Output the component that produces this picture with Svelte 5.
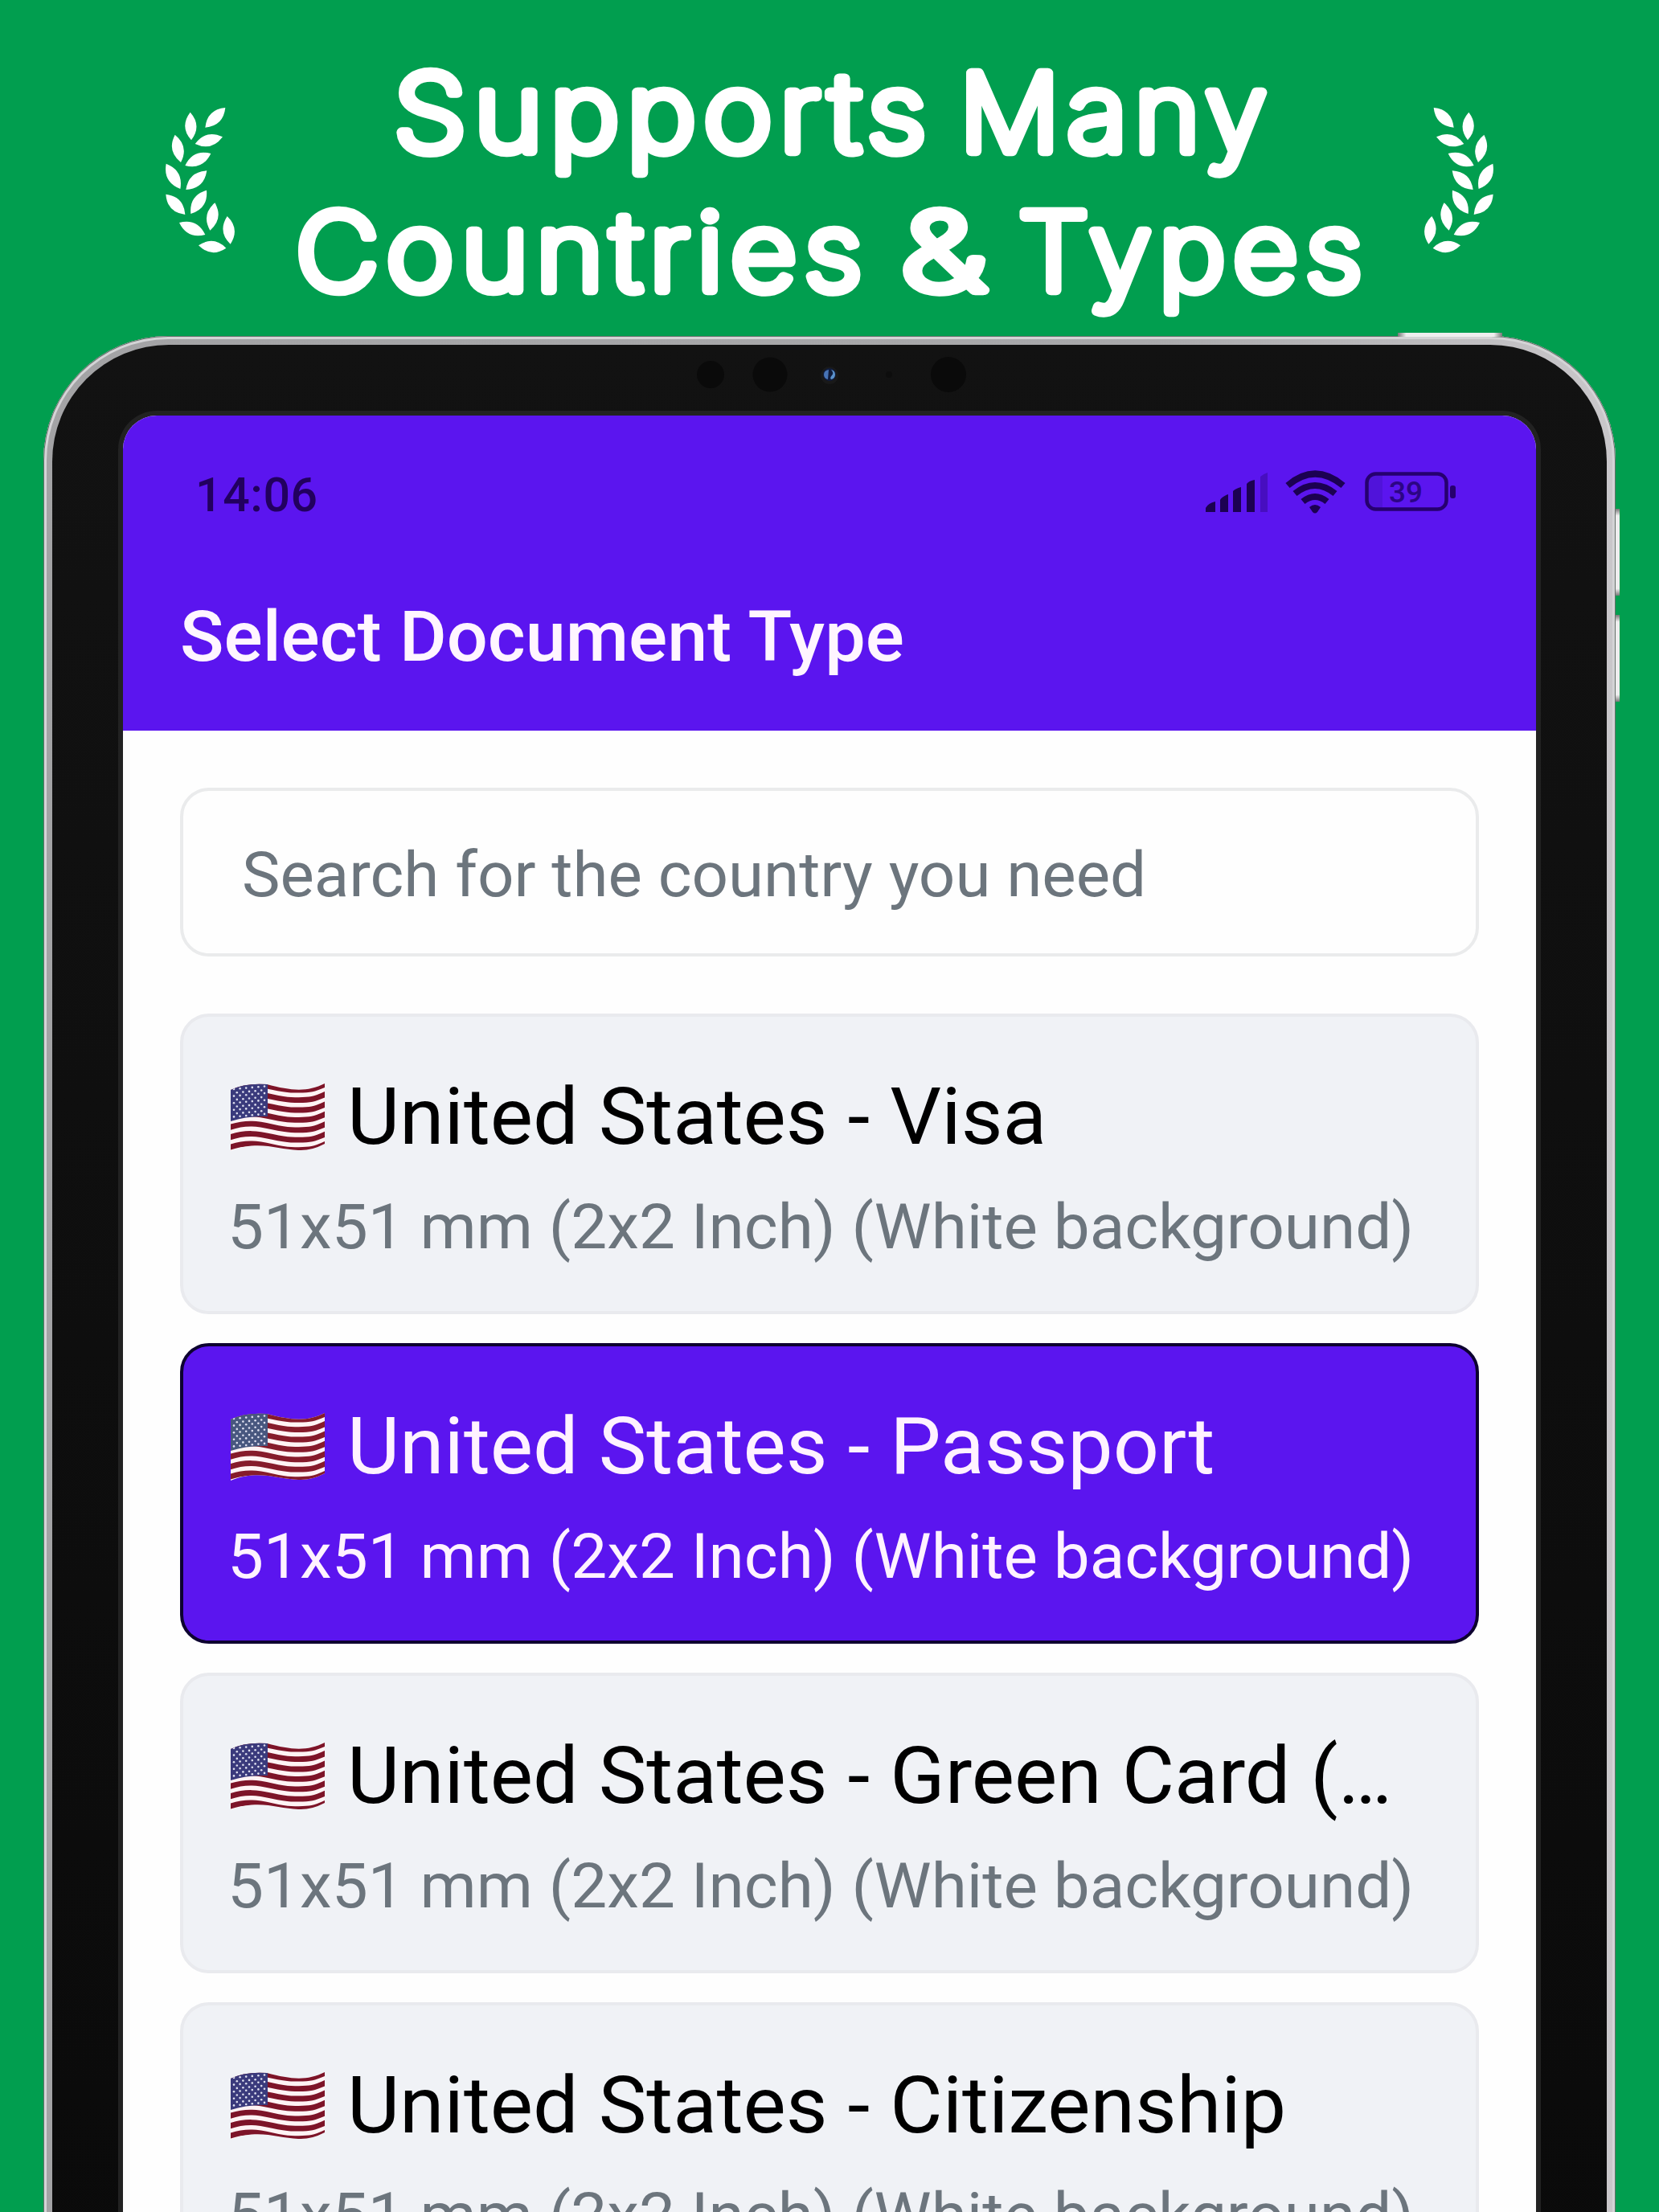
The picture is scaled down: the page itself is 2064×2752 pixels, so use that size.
<script>
  const cards = [
    { name: 'United States - Visa', selected: false },
    { name: 'United States - Passport', selected: true },
    { name: 'United States - Green Card (…', selected: false },
    { name: 'United States - Citizenship', selected: false },
  ];
  const size = '51x51 mm (2x2 Inch) (White background)';
  // Each leaf runs tip to tip: x1, y1, x2, y2
  const leaves = [
    [170, 89, 174, 193], [301, 72, 226, 146], [291, 181, 188, 207], [113, 173, 135, 276],
    [247, 243, 151, 288], [80, 281, 133, 375], [232, 307, 154, 378], [79, 395, 151, 471],
    [231, 380, 172, 468], [262, 427, 244, 530], [129, 501, 226, 546], [308, 477, 320, 581],
    [201, 586, 304, 596],
  ];
  const leafPath = ([x1, y1, x2, y2]) => {
    const mx = (x1 + x2) / 2, my = (y1 + y2) / 2;
    const nx = -(y2 - y1) * 0.41, ny = (x2 - x1) * 0.41;
    return `M${x1} ${y1}Q${mx + nx} ${my + ny} ${x2} ${y2}Q${mx - nx} ${my - ny} ${x1} ${y1}Z`;
  };
  const laurel = leaves.map(leafPath).join('');
  const stars = [];
  for (let r = 0; r < 9; r++) for (let c = 0; c < (r % 2 ? 5 : 6); c++) stars.push([4 + c * 7.6 + (r % 2 ? 3.8 : 0), 7 + r * 4.3 - c * 0.7]);
  const stripes = [0, 1, 2, 3, 4, 5, 6].map((i) => 3 + i * 12.4);
</script>

<div class="page">
  <header class="hero">
    <svg class="laurel" viewBox="0 0 420 690"><path d={laurel} /></svg>
    <svg class="headline" viewBox="0 0 1380 350">
      <text x="150" y="128" textLength="672" lengthAdjust="spacingAndGlyphs">Supports</text>
      <text x="854" y="128" textLength="391" lengthAdjust="spacingAndGlyphs">Many</text>
      <text x="28" y="301" textLength="714" lengthAdjust="spacingAndGlyphs">Countries</text>
      <text x="781" y="301" textLength="117" lengthAdjust="spacingAndGlyphs">&amp;</text>
      <text x="927" y="301" textLength="437" lengthAdjust="spacingAndGlyphs">Types</text>
    </svg>
    <svg class="laurel right" viewBox="0 0 420 690"><path d={laurel} /></svg>
  </header>

  <div class="device">
    <i class="btn top"></i><i class="btn vol up"></i><i class="btn vol down"></i>
    <div class="bezel">
      <svg class="sensors" viewBox="0 0 400 88">
        <g fill="#0a0a0a"><circle cx="44" cy="36" r="17" /><circle cx="118" cy="36" r="21.5" /><circle cx="340" cy="36" r="22" /></g>
        <circle cx="266" cy="36" r="4" fill="#0d0d0d" />
        <circle cx="192" cy="37" r="11" fill="#191919" /><circle cx="192" cy="36" r="8" fill="#101c3c" />
        <path d="M191 30q-6 1-6 6t5 6z" fill="#4773b5" /><path d="M194 30q5 1 5 6t-5 6q-2-2 1-5t-1-7" fill="#5b92cc" />
      </svg>
      <div class="screen">
        <div class="appbar">
          <div class="status">
            <span class="time">14:06</span>
            <svg class="sicons" viewBox="0 0 400 100">
              <g fill="#1c0152">
                <path d="M40 77v-5q3-6 12-8v13zM58 77V62q2-4 10-7v22zM74 77V51q3-3 10-5v31zM91 77V42q3-4 10-5v40z" />
                <path d="M108 77V33q3-3 9-5v49z" opacity=".3" />
              </g>
              <g fill="none" stroke="#1c0152" stroke-width="8">
                <path d="M142 44Q176 15 211 44" /><path d="M151 54Q176 34 201 54" /><path d="M161 64Q176 52 191 64" />
              </g>
              <path d="M169 71q7-6 14 0l-4 6q-3 3-6 0z" fill="#1c0152" />
              <path d="M250 31h-3q-6 0-6 6v29q0 6 6 6h13V31z" fill="#4a12cc" opacity=".6" />
              <rect x="240.500" y="29.500" width="99" height="44" rx="11" fill="none" stroke="#26006f" stroke-width="4.500" />
              <rect x="344" y="44" width="7" height="16" rx="3" fill="#26006f" />
              <text class="pct" x="289" y="65" text-anchor="middle">39</text>
            </svg>
          </div>
          <h1>Select Document Type</h1>
        </div>
        <main>
          <div class="search"><span>Search for the country you need</span></div>
          <div class="list">
            {#each cards as card}
              <div class="card" class:selected={card.selected}>
                <div class="name">
                  <svg class="flag" viewBox="0 0 117 84">
                    <clipPath id="wave"><path d="M0 8Q18-1 45 1C75 9 95 11 117 0V75Q100 84 84 83C58 82 34 70 0 84Z" /></clipPath>
                    <g clip-path="url(#wave)">
                      <rect width="117" height="84" fill="#fff3f4" />
                      {#each stripes as y}
                        <path d={`M-4 ${y + 3}C30 ${y - 10} 50 ${y + 4} 75 ${y + 5}S105 ${y + 4} 120 ${y - 3}`} fill="none" stroke={card.selected ? '#861b2b' : '#7d1428'} stroke-width="6.800" />
                      {/each}
                      <path d="M0 0H46V41Q20 40 0 47Z" fill={card.selected ? '#48577f' : '#3a3a7c'} />
                      {#each stars as [x, y]}<circle cx={x} cy={y} r="1.300" fill="#dfe0f0" />{/each}
                    </g>
                  </svg>
                  <span>{card.name}</span>
                </div>
                <div class="size">{size}</div>
              </div>
            {/each}
          </div>
        </main>
      </div>
    </div>
  </div>
</div>

<style>
  :global(body) { margin: 0; background: #019e4f; overflow: hidden; }
  .page { width: 2064px; height: 2752px; overflow: hidden; background: #019e4f; font-family: Roboto, sans-serif; display: flex; flex-direction: column; align-items: center; }
  .hero { display: flex; width: 1700px; height: 418px; flex: none; }
  .laurel { width: 140px; height: 230px; margin: 110px -2px 0; fill: #fff; flex: none; }
  .laurel.right { margin-left: auto; transform: scaleX(-1); }
  .headline { width: 1380px; height: 350px; margin: 60px 0 0 22px; flex: none; overflow: visible; }
  .headline text { font-family: Inter, sans-serif; font-weight: 200; font-size: 133px; letter-spacing: 9px; fill: #fff; stroke: #fff; stroke-width: 12.500px; stroke-linejoin: round; stroke-linecap: round; }
  .device { position: relative; width: 1956px; height: 2500px; flex: none; padding: 11px 11px 0; box-sizing: border-box; border-radius: 155px 155px 0 0; background: linear-gradient(90deg, #a3a3a5, #a9a9ab 70%, #c9c7ca); box-shadow: inset 0 0 0 1px #66706b, inset 0 0 0 4px #d4d4d6; }
  .bezel { height: 100%; box-sizing: border-box; padding: 82px 82px 0; border-radius: 145px 145px 0 0; background: linear-gradient(#121212, #0a0a0a); position: relative; }
  .btn { position: absolute; background: linear-gradient(90deg, #777, #eee 8%, #eee 92%, #777); }
  .btn.top { left: 1685px; top: -4px; width: 130px; height: 5px; }
  .btn.vol { right: -5px; width: 5px; height: 108px; background: linear-gradient(#777, #eee 8%, #eee 92%, #777); }
  .btn.up { top: 215px; }
  .btn.down { top: 347px; }
  .sensors { position: absolute; left: 775px; top: 1px; width: 400px; height: 88px; }
  .screen { box-sizing: border-box; height: 100%; border: 6px solid #222; border-bottom: 0; border-radius: 48px 48px 0 0; background: #fefefe; overflow: hidden; }
  .appbar { height: 392px; background: #5b15ef; box-sizing: border-box; padding: 43px 51px 0 71px; }
  .status { display: flex; justify-content: space-between; align-items: flex-start; height: 100px; }
  .time { font-size: 59px; line-height: 69px; font-weight: 500; color: #22005f; margin: 21px 0 0 19px; letter-spacing: 0.6px; }
  .sicons { width: 400px; height: 100px; flex: none; }
  .pct { font-size: 37px; font-weight: 500; fill: #2c0585; }
  h1 { margin: 82px 0 0; font-size: 87.500px; line-height: 100px; font-weight: 500; color: #fff5ff; white-space: nowrap; transform: scaleX(1.028); transform-origin: 0 0; }
  main { padding: 71px; }
  .search { box-sizing: border-box; height: 210px; border: 4px solid #eaebec; border-radius: 36px; padding: 0 73px; line-height: 210px; font-size: 78px; color: #6c757d; white-space: nowrap; }
  .search span { display: inline-block; transform: scaleX(1.024); transform-origin: 0 0; }
  .list { display: flex; flex-direction: column; gap: 36px; margin-top: 71px; }
  .card { box-sizing: border-box; height: 374px; border: 4px solid #e9eaee; border-radius: 36px; background: #f0f2f6; padding: 68px 59px 0; color: #000; white-space: nowrap; }
  .name { display: flex; align-items: center; height: 114px; font-size: 97.500px; }
  .name span { transform: scaleX(1.03); transform-origin: 0 0; }
  .flag { width: 117px; height: 84px; margin: 0 28px 0 0; flex: none; }
  .size { margin: 34px 0 0 -4px; font-size: 77.500px; line-height: 91px; color: #6c757d; transform: scaleX(1.033); transform-origin: 0 0; }
  .selected { background: #5b15ef; border-color: #0d0230; color: #fff2ff; }
  .selected .size { color: #fff2ff; }
</style>
